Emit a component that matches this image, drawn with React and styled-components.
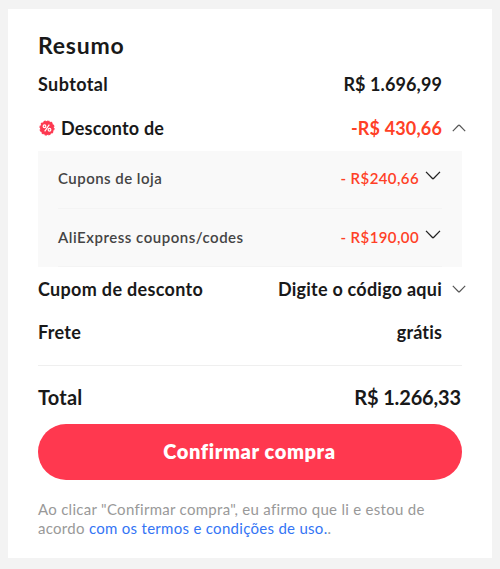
import React from "react";
import styled, { createGlobalStyle } from "styled-components";

const GlobalStyle = createGlobalStyle`
  * { box-sizing: border-box; }
  body {
    margin: 0;
    background: #f3f3f3;
    font-family: Lato, "Open Sans", sans-serif;
    color: #191919;
  }
`;

const Page = styled.div`
  height: 569px;
  padding: 9px 8px 11px;
`;

const Card = styled.main`
  height: 549px;
  padding: 21px 30px 0;
  background: #fff;
`;

const Title = styled.h1`
  margin: 0;
  height: 32px;
  font-size: 23px;
  line-height: 30px;
  font-weight: 700;
  letter-spacing: 0.75px;
`;

const Row = styled.div`
  display: flex;
  align-items: center;
  justify-content: space-between;
  height: ${(p) => p.$height}px;
  padding-right: ${(p) => (p.$flush ? 1 : 20)}px;
  font-size: ${(p) => (p.$flush ? 20 : 18)}px;
  line-height: 24px;
  font-weight: 700;
`;

const Label = styled.span`
  display: flex;
  align-items: center;
  gap: 6px;
  letter-spacing: ${(p) => p.$track || 0}px;
  white-space: pre;
`;

const Amount = styled.span`
  color: ${(p) => (p.$discount ? "#ff4026" : "inherit")};
  letter-spacing: ${(p) => p.$track || 0}px;
  white-space: pre;
`;

const Value = styled.span`
  display: flex;
  align-items: center;
`;

const ToggleSlot = styled.span`
  display: flex;
  width: 14px;
  margin: 1px -24px 0 10px;
`;

const Coupons = styled.section`
  height: 116px;
  margin-top: 1px;
  padding: 0 20px;
  background: #f9f9f9;
`;

const CouponRow = styled.div`
  display: flex;
  align-items: center;
  justify-content: space-between;
  height: 58px;
  padding-bottom: ${(p) => p.$bottom}px;
  border-bottom: 1px solid #f4f4f4;
  font-size: 15px;
  line-height: 20px;
  font-weight: 600;
  color: #444;
`;

const CouponChevron = styled.span`
  display: flex;
  margin: -6px 1px 0 6px;
`;

const Divider = styled.hr`
  width: 100%;
  height: 1px;
  margin: 11px 0 0;
  border: 0;
  background: #efefef;
`;

const ConfirmButton = styled.button`
  display: block;
  width: 100%;
  height: 56px;
  margin-top: -4px;
  padding: 0 1px 2px 0;
  border: 0;
  border-radius: 28px;
  background: #ff384f;
  color: #fff;
  font: 800 20px/54px Lato, "Open Sans", sans-serif;
  letter-spacing: 0.6px;
`;

const Terms = styled.p`
  margin: 20px 0 0;
  font-size: 15px;
  line-height: 19px;
  letter-spacing: 0.29px;
  color: #999;
  white-space: nowrap;
`;

const TermsLink = styled.a`
  color: #3475f5;
`;

const Chevron = ({ up, width = 14, height = 8, color = "#555" }) => (
  <svg width={width} height={height} viewBox="0 0 14 8" fill="none">
    <path
      d={up ? "M.8 7.2 6.3 1.5Q7 .8 7.7 1.5L13.2 7.2" : "M.8.8 6.3 6.5Q7 7.2 7.7 6.5L13.2.8"}
      stroke={color}
      strokeWidth="1.15"
    />
  </svg>
);

const BadgeIcon = styled.svg`
  display: block;
  margin: 1px 0 0 1px;
`;

const PercentBadge = () => (
  <BadgeIcon width="16" height="16" viewBox="0 0 16 16">
    <circle cx="8" cy="8" r="7" fill="#fd3850" />
    <circle cx="8" cy="8" r="7" fill="none" stroke="#fd3850" strokeWidth="1.2" strokeDasharray="2.2 1.465" />
    <g fill="none" stroke="#fff" strokeWidth="1.2">
      <circle cx="5.5" cy="6.2" r="1.35" />
      <circle cx="10.5" cy="9.8" r="1.35" />
      <path d="M10.3 4.6 5.7 11.4" />
    </g>
  </BadgeIcon>
);

export default function App() {
  return (
    <>
      <GlobalStyle />
      <Page>
        <Card>
          <Title>Resumo</Title>
          <Row $height={43}>
            <Label $track={0.4}>Subtotal</Label>
            <Amount $track={0.1}>R$ 1.696,99</Amount>
          </Row>
          <Row $height={45}>
            <Label $track={0.18}><PercentBadge />Desconto de</Label>
            <Value>
              <Amount $discount $track={0.15}>-R$ 430,66</Amount>
              <ToggleSlot><Chevron up /></ToggleSlot>
            </Value>
          </Row>
          <Coupons>
            <CouponRow $bottom={3}>
              <Label $track={0.47}>Cupons de loja</Label>
              <Value><Amount $discount $track={0.4}>- R$240,66</Amount><CouponChevron><Chevron width={16} height={9} color="#222" /></CouponChevron></Value>
            </CouponRow>
            <CouponRow $bottom={1}>
              <Label $track={0.52}>AliExpress coupons/codes</Label>
              <Value><Amount $discount $track={0.4}>- R$190,00</Amount><CouponChevron><Chevron width={16} height={9} color="#222" /></CouponChevron></Value>
            </CouponRow>
          </Coupons>
          <Row $height={43}>
            <Label $track={0.32}>Cupom de desconto</Label>
            <Value>
              <Amount $track={0.24}>Digite o código aqui</Amount>
              <ToggleSlot><Chevron /></ToggleSlot>
            </Value>
          </Row>
          <Row $height={44}>
            <Label $track={0.3}>Frete</Label>
            <Amount $track={0.15}>grátis</Amount>
          </Row>
          <Divider />
          <Row $height={62} $flush>
            <Label $track={0.2}>Total</Label>
            <Amount $track={-0.15}>R$ 1.266,33</Amount>
          </Row>
          <ConfirmButton>Confirmar compra</ConfirmButton>
          <Terms>
            Ao clicar "Confirmar compra", eu afirmo que li e estou de
            <br />
            acordo <TermsLink>com os termos e condições de uso.</TermsLink>.
          </Terms>
        </Card>
      </Page>
    </>
  );
}
